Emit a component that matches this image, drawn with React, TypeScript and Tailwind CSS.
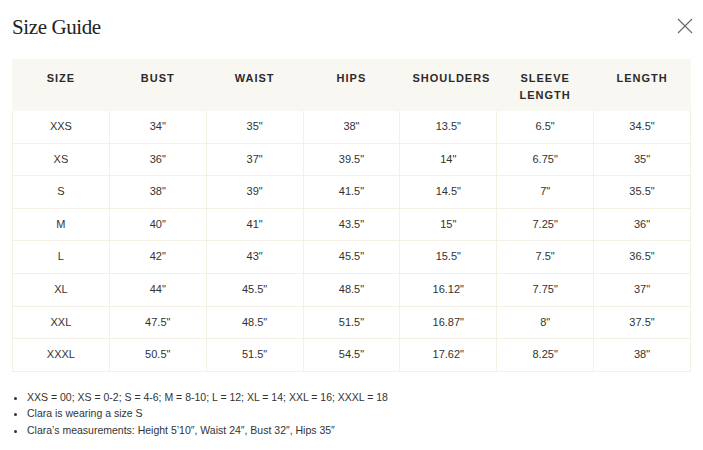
import React from 'react';

const HEADERS = ['SIZE', 'BUST', 'WAIST', 'HIPS', 'SHOULDERS', 'SLEEVE LENGTH', 'LENGTH'];

const ROWS: string[][] = [
  ['XXS', '34"', '35"', '38"', '13.5"', '6.5"', '34.5"'],
  ['XS', '36"', '37"', '39.5"', '14"', '6.75"', '35"'],
  ['S', '38"', '39"', '41.5"', '14.5"', '7"', '35.5"'],
  ['M', '40"', '41"', '43.5"', '15"', '7.25"', '36"'],
  ['L', '42"', '43"', '45.5"', '15.5"', '7.5"', '36.5"'],
  ['XL', '44"', '45.5"', '48.5"', '16.12"', '7.75"', '37"'],
  ['XXL', '47.5"', '48.5"', '51.5"', '16.87"', '8"', '37.5"'],
  ['XXXL', '50.5"', '51.5"', '54.5"', '17.62"', '8.25"', '38"'],
];

const NOTES = [
  'XXS = 00; XS = 0-2; S = 4-6; M = 8-10; L = 12; XL = 14; XXL = 16; XXXL = 18',
  'Clara is wearing a size S',
  'Clara\u2019s measurements: Height 5\u201910\u2033, Waist 24\u2033, Bust 32\u2033, Hips 35\u2033',
];

const App: React.FC = () => {
  return (
    <div className="w-[703px] h-[450px] bg-white overflow-hidden px-3 font-['Liberation_Sans',Arial,sans-serif] text-[#333]">
      {/* Title + close */}
      <div className="flex items-start justify-between h-[59px] pt-[14px]">
        <h2 className="font-['Liberation_Serif',serif] text-[21px] leading-[26px] text-[#222] tracking-[-0.4px]">
          Size Guide
        </h2>
        <button className="mt-[4px] mr-[-2px] text-[#666]" aria-label="Close">
          <svg width="16" height="16" viewBox="0 0 16 16" fill="none" stroke="currentColor" strokeWidth="1.1">
            <path d="M1 1 L15 15 M15 1 L1 15" />
          </svg>
        </button>
      </div>

      {/* Table */}
      <table className="w-[679px] border-collapse table-fixed">
        <thead>
          <tr className="bg-[#f9f7f2]">
            {HEADERS.map((h) => (
              <th
                key={h}
                className="h-[51px] align-top pt-[10px] px-3 text-[11px] leading-[17px] font-bold tracking-[1px] text-[#2b2b2b] border border-[#f9f7f2]"
              >
                {h}
              </th>
            ))}
          </tr>
        </thead>
        <tbody>
          {ROWS.map((r) => (
            <tr key={r[0]}>
              {r.map((c, i) => (
                <td
                  key={i}
                  className="h-[32.6px] pb-[1px] text-center text-[11px] text-[#333] border border-[#f4f0e8]"
                >
                  {c}
                </td>
              ))}
            </tr>
          ))}
        </tbody>
      </table>

      {/* Notes */}
      <ul className="mt-[17px] list-disc pl-[15px] text-[10.5px] leading-[16.5px] text-[#333]">
        {NOTES.map((n) => (
          <li key={n}>{n}</li>
        ))}
      </ul>
    </div>
  );
};

export default App;
